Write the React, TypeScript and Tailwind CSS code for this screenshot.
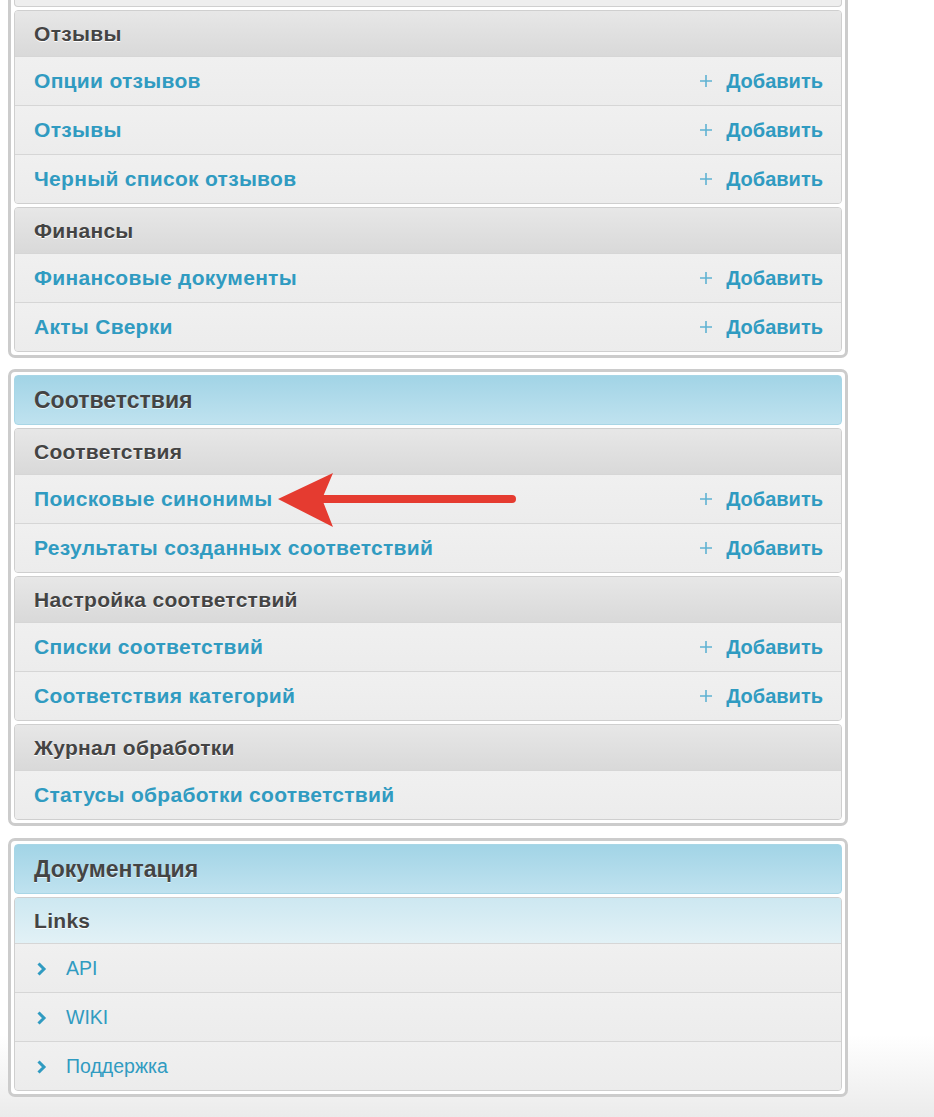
import React from "react";

type Row = { label: string; add?: boolean };
type Mod = { title: string; rows: Row[]; variant?: "gray" | "blue" };

const FONT = { fontFamily: '"Liberation Sans", Arial, sans-serif' };

function Plus() {
  return (
    <svg width="14" height="14" viewBox="0 0 14 14" className="shrink-0">
      <path d="M7 1v12M1 7h12" stroke="#5fb2d2" strokeWidth="1.6" />
    </svg>
  );
}

function Chevron() {
  return (
    <svg width="11" height="14" viewBox="0 0 11 14" className="shrink-0">
      <path d="M2.5 1.5L8 7l-5.5 5.5" fill="none" stroke="#309bc1" strokeWidth="3" strokeLinejoin="miter" />
    </svg>
  );
}

function Module({ m, links }: { m: Mod; links?: boolean }) {
  const headerBg =
    m.variant === "blue"
      ? "bg-[linear-gradient(to_bottom,#cde8f1,#e2f1f6)]"
      : "bg-[linear-gradient(to_bottom,#e7e7e7,#d9d9d9)]";
  return (
    <div className="rounded-[4px] border border-[#cfcfcf] overflow-hidden bg-[#eeeeee]">
      <div
        className={`h-[45px] flex items-center px-[19px] text-[21px] tracking-[0.3px] font-bold text-[#444] [text-shadow:0_1px_0_#fff] ${headerBg}`}
      >
        {m.title}
      </div>
      {m.rows.map((r, i) => (
        <div
          key={i}
          className="h-[49px] flex items-center border-t border-[#d6d6d6] px-[19px] pr-[18px] bg-[linear-gradient(to_bottom,#f0f0f0,#ececec)]"
        >
          {links ? (
            <div className="flex items-center gap-[19px] pl-[2px] pt-[1px]">
              <Chevron />
              <span className="text-[19.5px] text-[#309bc1]">{r.label}</span>
            </div>
          ) : (
            <span className="text-[21px] tracking-[0.3px] font-bold text-[#309bc1]">{r.label}</span>
          )}
          {r.add && (
            <div className="ml-auto flex items-center gap-[13px]">
              <Plus />
              <span className="text-[20px] font-bold text-[#309bc1]">Добавить</span>
            </div>
          )}
        </div>
      ))}
    </div>
  );
}

function Caption({ title }: { title: string }) {
  return (
    <div className="h-[50px] rounded-[4px] flex items-center px-[19px] text-[23px] font-bold text-[#444] [text-shadow:0_1px_0_#e6f4f9] bg-[linear-gradient(to_bottom,#a2d4e6,#bfe2ef)] border border-[#a8d6e6]">
      {title}
    </div>
  );
}

export default function App() {
  return (
    <div
      className="relative w-[934px] h-[1117px] overflow-hidden bg-[linear-gradient(to_bottom,#ffffff_1035px,#ebebeb_1117px)]"
      style={FONT}
    >
      <div className="w-[840px] ml-[8px] flex flex-col">
        {/* panel 1 (top cut off) */}
        <div className="border-x-[3px] border-b-[3px] border-[#cccccc] rounded-b-[7px] px-[3px] pb-[3px] flex flex-col gap-[3px] bg-white">
          <div className="h-[7px] border-x border-b border-[#cfcfcf] rounded-b-[4px] bg-[#eeeeee]" />
          <Module
            m={{
              title: "Отзывы",
              rows: [
                { label: "Опции отзывов", add: true },
                { label: "Отзывы", add: true },
                { label: "Черный список отзывов", add: true },
              ],
            }}
          />
          <Module
            m={{
              title: "Финансы",
              rows: [
                { label: "Финансовые документы", add: true },
                { label: "Акты Сверки", add: true },
              ],
            }}
          />
        </div>

        {/* panel 2 */}
        <div className="mt-[11px] border-[3px] border-[#cccccc] rounded-[7px] p-[3px] flex flex-col gap-[3px] bg-white">
          <Caption title="Соответствия" />
          <Module
            m={{
              title: "Соответствия",
              rows: [
                { label: "Поисковые синонимы", add: true },
                { label: "Результаты созданных соответствий", add: true },
              ],
            }}
          />
          <Module
            m={{
              title: "Настройка соответствий",
              rows: [
                { label: "Списки соответствий", add: true },
                { label: "Соответствия категорий", add: true },
              ],
            }}
          />
          <Module
            m={{
              title: "Журнал обработки",
              rows: [{ label: "Статусы обработки соответствий" }],
            }}
          />
        </div>

        {/* panel 3 */}
        <div className="mt-[12px] border-[3px] border-[#cccccc] rounded-[7px] p-[3px] flex flex-col gap-[3px] bg-white">
          <Caption title="Документация" />
          <Module
            links
            m={{
              title: "Links",
              variant: "blue",
              rows: [{ label: "API" }, { label: "WIKI" }, { label: "Поддержка" }],
            }}
          />
        </div>
      </div>

      {/* red arrow annotation */}
      <svg
        className="absolute left-0 top-0 pointer-events-none"
        width="934"
        height="1117"
        viewBox="0 0 934 1117"
      >
        <line x1="318" y1="499" x2="512" y2="499" stroke="#e53b30" strokeWidth="8" strokeLinecap="round" />
        <path d="M278 499 L333 473 L322 499 L333 527 Z" fill="#e53b30" />
      </svg>
    </div>
  );
}
